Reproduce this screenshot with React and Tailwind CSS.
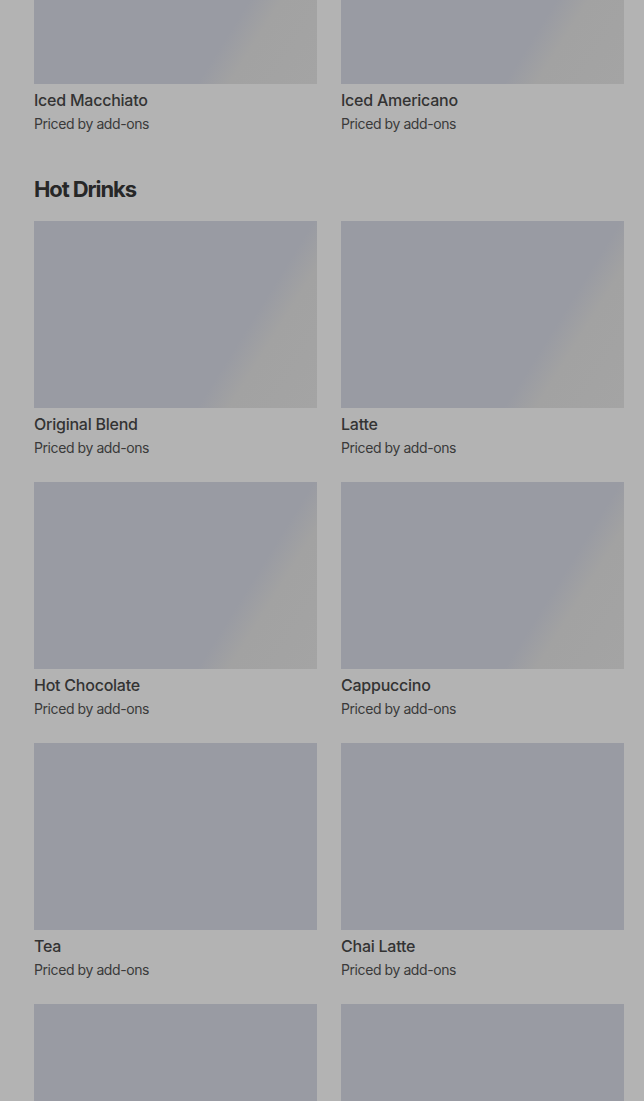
const icedDrinks = [
  { name: 'Iced Macchiato', shimmer: true },
  { name: 'Iced Americano', shimmer: true },
];

const hotDrinks = [
  { name: 'Original Blend', shimmer: true },
  { name: 'Latte', shimmer: true },
  { name: 'Hot Chocolate', shimmer: true },
  { name: 'Cappuccino', shimmer: true },
  { name: 'Tea', shimmer: false },
  { name: 'Chai Latte', shimmer: false },
  { name: 'Mocha', shimmer: false },
  { name: 'Flat White', shimmer: false },
];

function DrinkCard({ item }) {
  return (
    <div className="flex flex-col">
      <div
        className={
          item.shimmer
            ? 'h-[187px] w-full bg-[linear-gradient(122deg,#999ba3_0%,#999ba3_70%,#a2a2a2_78%,#a4a4a4_100%)]'
            : 'h-[187px] w-full bg-[#999ba3]'
        }
      />
      <p className="mt-1 text-base leading-6 font-medium tracking-[-0.015em] text-[#333333]">
        {item.name}
      </p>
      <p className="mt-0.5 text-sm leading-5 tracking-[-0.03em] text-[#3a3a3a]">
        Priced by add-ons
      </p>
    </div>
  );
}

export default function App() {
  return (
    <div
      className="min-h-screen bg-[#b3b3b3] pb-10 pl-[34px] pr-5"
      style={{ fontFamily: 'Inter, "Liberation Sans", sans-serif' }}
    >
      <div className="-mt-[103px] grid grid-cols-2 gap-x-6 gap-y-6">
        {icedDrinks.map((item) => (
          <DrinkCard key={item.name} item={item} />
        ))}
      </div>

      <h2 className="mt-[41px] mb-[18px] text-[22px] leading-7 font-bold tracking-[-0.05em] text-[#272727]">
        Hot Drinks
      </h2>

      <div className="grid grid-cols-2 gap-x-6 gap-y-6">
        {hotDrinks.map((item) => (
          <DrinkCard key={item.name} item={item} />
        ))}
      </div>
    </div>
  );
}
